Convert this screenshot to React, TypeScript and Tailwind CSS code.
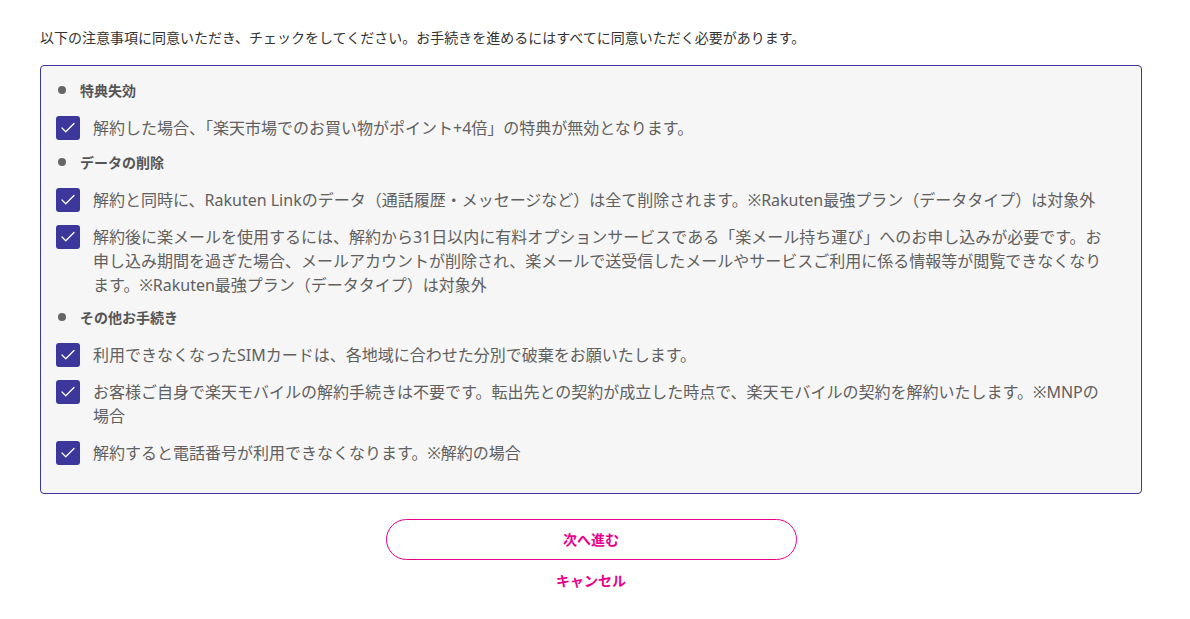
import { Check } from "lucide-react";

type Item = { text: string };

const SECTIONS: { title: string; items: Item[] }[] = [
  {
    title: "特典失効",
    items: [{ text: "解約した場合、「楽天市場でのお買い物がポイント+4倍」の特典が無効となります。" }],
  },
  {
    title: "データの削除",
    items: [
      {
        text: "解約と同時に、Rakuten Linkのデータ（通話履歴・メッセージなど）は全て削除されます。※Rakuten最強プラン（データタイプ）は対象外",
      },
      {
        text: "解約後に楽メールを使用するには、解約から31日以内に有料オプションサービスである「楽メール持ち運び」へのお申し込みが必要です。お申し込み期間を過ぎた場合、メールアカウントが削除され、楽メールで送受信したメールやサービスご利用に係る情報等が閲覧できなくなります。※Rakuten最強プラン（データタイプ）は対象外",
      },
    ],
  },
  {
    title: "その他お手続き",
    items: [
      { text: "利用できなくなったSIMカードは、各地域に合わせた分別で破棄をお願いたします。" },
      {
        text: "お客様ご自身で楽天モバイルの解約手続きは不要です。転出先との契約が成立した時点で、楽天モバイルの契約を解約いたします。※MNPの場合",
      },
      { text: "解約すると電話番号が利用できなくなります。※解約の場合" },
    ],
  },
];

function CheckRow({ text }: Item) {
  return (
    <label className="flex items-start gap-[13px]">
      <span className="flex h-6 w-6 shrink-0 items-center justify-center rounded-[3px] bg-[#3c389b]">
        <Check className="h-[18px] w-[18px] text-white" strokeWidth={1.75} />
      </span>
      <span className="text-[16px] leading-6 text-[#606060]">{text}</span>
    </label>
  );
}

export default function App() {
  return (
    <div
      className="min-h-screen bg-white pl-10 pr-12 pt-[28px]"
      style={{ fontFamily: '"Noto Sans", "Noto Sans CJK JP", sans-serif' }}
    >
      <p className="text-[14px] leading-5 text-[#333]">
        以下の注意事項に同意いただき、チェックをしてください。お手続きを進めるにはすべてに同意いただく必要があります。
      </p>

      <div className="mt-[17px] rounded-[4px] border border-[#3c389b] bg-[#f6f6f6] pb-[28px] pl-[15px] pr-[32px] pt-[14px]">
        {SECTIONS.map((sec, i) => (
          <section key={sec.title} className={i === 1 ? "mt-3" : i === 2 ? "mt-[10px]" : ""}>
            <h3 className="flex h-5 items-center gap-[14px] pl-[2px] text-[14px] font-bold text-[#555]">
              <span className="h-2 w-2 rounded-full bg-[#666]" />
              {sec.title}
            </h3>
            <div className="mt-4 flex flex-col gap-[13px]">
              {sec.items.map((it) => (
                <CheckRow key={it.text} text={it.text} />
              ))}
            </div>
          </section>
        ))}
      </div>

      <div className="mt-[25px] flex flex-col items-center">
        <button className="h-[41px] w-[411px] rounded-full border border-[#eb008b] bg-white text-[14px] font-bold text-[#eb008b]">
          次へ進む
        </button>
        <button className="mt-[11px] text-[14px] font-bold leading-5 text-[#eb008b]">キャンセル</button>
      </div>
    </div>
  );
}
